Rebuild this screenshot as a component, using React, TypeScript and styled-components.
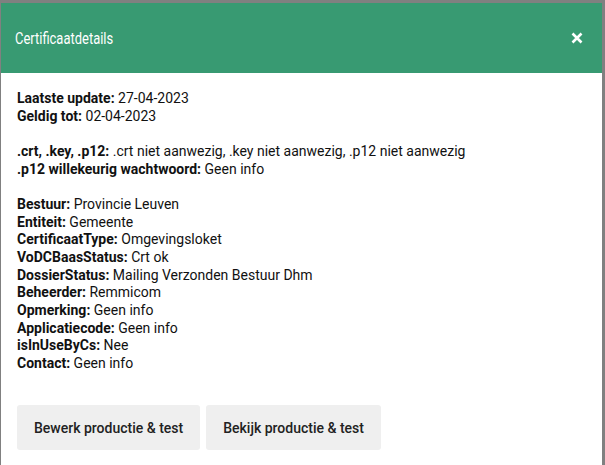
import React from "react";
import styled, { createGlobalStyle } from "styled-components";

const Global = createGlobalStyle`
  html, body { margin: 0; padding: 0; background: #808080; }
  body { font-family: Roboto, "Noto Sans", Arial, sans-serif; }
  #root { height: 465px; overflow: hidden; }
`;

const Dialog = styled.div`
  margin: 3px 3px 0 1px;
  height: 462px;
  background: #ffffff;
  display: flex;
  flex-direction: column;
`;

const Header = styled.header`
  height: 70px;
  background: #389a72;
  display: flex;
  align-items: center;
  justify-content: space-between;
  padding: 0 19px 0 14px;
  box-sizing: border-box;
`;

const Title = styled.h2`
  margin: 0;
  font-size: 16px;
  font-weight: 400;
  color: #ffffff;
  transform: scaleX(0.81);
  transform-origin: left center;
`;

const Close = styled.button`
  border: 0;
  background: transparent;
  padding: 0;
  width: 12px;
  height: 12px;
  display: flex;
  cursor: pointer;
`;

const Body = styled.div`
  padding: 17px 16px 0 16px;
  font-size: 14px;
  line-height: 17.65px;
  color: #111;
`;

const Group = styled.div`
  margin-bottom: 17.65px;
`;

const Line = styled.div``;

const Label = styled.b`
  font-weight: 700;
`;

const Actions = styled.div`
  display: flex;
  gap: 6px;
  padding: 15px 16px 0 16px;
`;

const Button = styled.button`
  height: 45px;
  padding: 0 17px;
  border: 0;
  border-radius: 3px;
  background: #efefef;
  color: #222;
  font-family: Roboto, "Noto Sans", Arial, sans-serif;
  font-size: 14px;
  font-weight: 500;
`;

const groups: [string, string][][] = [
  [
    ["Laatste update", "27-04-2023"],
    ["Geldig tot", "02-04-2023"],
  ],
  [
    [".crt, .key, .p12", ".crt niet aanwezig, .key niet aanwezig, .p12 niet aanwezig"],
    [".p12 willekeurig wachtwoord", "Geen info"],
  ],
  [
    ["Bestuur", "Provincie Leuven"],
    ["Entiteit", "Gemeente"],
    ["CertificaatType", "Omgevingsloket"],
    ["VoDCBaasStatus", "Crt ok"],
    ["DossierStatus", "Mailing Verzonden Bestuur Dhm"],
    ["Beheerder", "Remmicom"],
    ["Opmerking", "Geen info"],
    ["Applicatiecode", "Geen info"],
    ["isInUseByCs", "Nee"],
    ["Contact", "Geen info"],
  ],
];

export default function App() {
  return (
    <>
      <Global />
      <Dialog>
        <Header>
          <Title>Certificaatdetails</Title>
          <Close aria-label="Sluiten">
            <svg width="12" height="12" viewBox="0 0 12 12">
              <path d="M1.5 1.5 L10.5 10.5 M10.5 1.5 L1.5 10.5" stroke="#fff" strokeWidth="2.6" strokeLinecap="butt" />
            </svg>
          </Close>
        </Header>
        <Body>
          {groups.map((g, i) => (
            <Group key={i}>
              {g.map(([k, v]) => (
                <Line key={k}>
                  <Label>{k}:</Label> {v}
                </Line>
              ))}
            </Group>
          ))}
        </Body>
        <Actions>
          <Button>Bewerk productie &amp; test</Button>
          <Button>Bekijk productie &amp; test</Button>
        </Actions>
      </Dialog>
    </>
  );
}
